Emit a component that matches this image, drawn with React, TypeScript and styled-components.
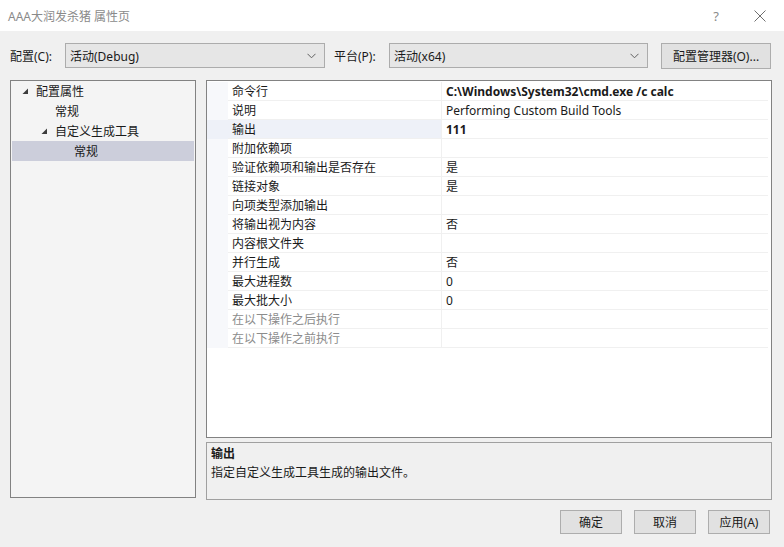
import React from 'react';
import styled, { createGlobalStyle } from 'styled-components';

type PropRow = {
    label: string,
    value?: string,
    bold?: boolean,
    disabled?: boolean,
    selected?: boolean,
}

type TreeNode = {
    label: string,
    level: number,
    expanded?: boolean,
    selected?: boolean,
}

const treeNodes: TreeNode[] = [
    {label: '配置属性', level: 0, expanded: true},
    {label: '常规', level: 1},
    {label: '自定义生成工具', level: 1, expanded: true},
    {label: '常规', level: 2, selected: true},
];

const rows: PropRow[] = [
    {label: '命令行', value: 'C:\\Windows\\System32\\cmd.exe /c calc', bold: true},
    {label: '说明', value: 'Performing Custom Build Tools'},
    {label: '输出', value: '111', bold: true, selected: true},
    {label: '附加依赖项'},
    {label: '验证依赖项和输出是否存在', value: '是'},
    {label: '链接对象', value: '是'},
    {label: '向项类型添加输出'},
    {label: '将输出视为内容', value: '否'},
    {label: '内容根文件夹'},
    {label: '并行生成', value: '否'},
    {label: '最大进程数', value: '0'},
    {label: '最大批大小', value: '0'},
    {label: '在以下操作之后执行', disabled: true},
    {label: '在以下操作之前执行', disabled: true},
];

const Arrow = () => (
    <svg width="7" height="7" viewBox="0 0 7 7">
        <polygon points="6,0.5 6,6 0.5,6" fill="#3c3c3c" />
    </svg>
);

const Chevron = () => (
    <svg width="9" height="6" viewBox="0 0 9 6">
        <polyline points="0.5,0.8 4.5,4.8 8.5,0.8" fill="none" stroke="#606060" strokeWidth="1" />
    </svg>
);

export default function App() {
    return (
        <Window>
            <GlobalStyle />
            <TitleBar>
                <Title>AAA大润发杀猪 属性页</Title>
                <TitleButtons>
                    <HelpGlyph>?</HelpGlyph>
                    <svg width="12" height="12" viewBox="0 0 12 12">
                        <path d="M0.5 0.5 L11.5 11.5 M11.5 0.5 L0.5 11.5" stroke="#6e6e6e" strokeWidth="1" />
                    </svg>
                </TitleButtons>
            </TitleBar>

            <Toolbar>
                <FieldLabel>配置(C):</FieldLabel>
                <Combo $width={260}>
                    <span>活动(Debug)</span>
                    <Chevron />
                </Combo>
                <FieldLabel $gap={9}>平台(P):</FieldLabel>
                <Combo $width={259}>
                    <span>活动(x64)</span>
                    <Chevron />
                </Combo>
                <Button $width={110} $height={26} style={{marginLeft: 13}}>配置管理器(O)...</Button>
            </Toolbar>

            <Main>
                <TreePanel>
                    {treeNodes.map((node, index) => (
                        <TreeRow key={node.label + index} $level={node.level} $selected={node.selected}>
                            <ArrowSlot>{node.expanded && <Arrow />}</ArrowSlot>
                            {node.label}
                        </TreeRow>
                    ))}
                </TreePanel>

                <RightColumn>
                    <GridPanel>
                        {rows.map(row => (
                            <GridRow key={row.label}>
                                <Gutter $selected={row.selected} />
                                <LabelCell $selected={row.selected} $disabled={row.disabled}>{row.label}</LabelCell>
                                <ValueCell $bold={row.bold}>{row.value}</ValueCell>
                            </GridRow>
                        ))}
                    </GridPanel>
                    <DescPanel>
                        <DescTitle>输出</DescTitle>
                        <DescText>指定自定义生成工具生成的输出文件。</DescText>
                    </DescPanel>
                </RightColumn>
            </Main>

            <Footer>
                <Button $width={62} $height={24}>确定</Button>
                <Button $width={62} $height={24}>取消</Button>
                <Button $width={62} $height={24}>应用(A)</Button>
            </Footer>
        </Window>
    )
}

const GlobalStyle = createGlobalStyle`
    html, body {
        margin: 0;
        padding: 0;
        background: #f0f0f0;
        overflow: hidden;
    }
    body {
        font-family: "Noto Sans", "Noto Sans CJK SC", sans-serif;
        font-size: 12px;
        color: #1a1a1a;
    }
`;

const Window = styled.div`
    width: 784px;
    height: 547px;
    display: flex;
    flex-direction: column;
    background: #f0f0f0;
`;

const TitleBar = styled.div`
    height: 31px;
    background: #ffffff;
    display: flex;
    align-items: center;
    justify-content: space-between;
    padding: 0 18px 0 8px;
`;

const Title = styled.span`
    color: #8a8a8a;
    font-size: 12px;
`;

const TitleButtons = styled.div`
    display: flex;
    align-items: center;
    gap: 35px;
`;

const HelpGlyph = styled.span`
    color: #8a8a8a;
    font-size: 13px;
`;

const Toolbar = styled.div`
    display: flex;
    align-items: center;
    padding: 11px 0 0 10px;
    height: 27px;
`;

const FieldLabel = styled.span<{ $gap?: number }>`
    margin-left: ${p => p.$gap ?? 0}px;
    width: 55px;
    flex-shrink: 0;
    white-space: nowrap;
`;

const Combo = styled.div<{ $width: number }>`
    width: ${p => p.$width}px;
    height: 25px;
    box-sizing: border-box;
    background: #e6e6e6;
    border: 1px solid #acacac;
    display: flex;
    align-items: center;
    justify-content: space-between;
    padding: 0 8px 0 4px;
    svg {
        margin-top: 1px;
    }
`;

const Button = styled.div<{ $width: number, $height: number }>`
    width: ${p => p.$width}px;
    height: ${p => p.$height}px;
    box-sizing: border-box;
    background: #e1e1e1;
    border: 1px solid #adadad;
    display: flex;
    align-items: center;
    justify-content: center;
    white-space: nowrap;
`;

const Main = styled.div`
    display: flex;
    gap: 10px;
    padding: 11px 12px 0 10px;
`;

const TreePanel = styled.div`
    width: 186px;
    height: 418px;
    box-sizing: border-box;
    border: 1px solid #828282;
    background: #f4f4f4;
    padding: 0 1px;
`;

const TreeRow = styled.div<{ $level: number, $selected?: boolean }>`
    height: 20px;
    display: flex;
    align-items: center;
    padding-left: ${p => 10 + p.$level * 19}px;
    background: ${p => p.$selected ? '#cccedb' : 'transparent'};
`;

const ArrowSlot = styled.span`
    width: 14px;
    display: inline-flex;
    align-items: center;
    svg {
        margin-top: 1px;
    }
`;

const RightColumn = styled.div`
    flex: 1;
    display: flex;
    flex-direction: column;
    gap: 4px;
`;

const GridPanel = styled.div`
    height: 358px;
    box-sizing: border-box;
    border: 1px solid #828282;
    background: #ffffff;
    padding: 1px 3px 0 0;
`;

const GridRow = styled.div`
    height: 19px;
    display: flex;
`;

const Gutter = styled.div<{ $selected?: boolean }>`
    width: 21px;
    flex-shrink: 0;
    background: ${p => p.$selected ? '#eef1f8' : '#f7f8fb'};
`;

const LabelCell = styled.div<{ $selected?: boolean, $disabled?: boolean }>`
    width: 214px;
    flex-shrink: 0;
    box-sizing: border-box;
    padding-left: 4px;
    display: flex;
    align-items: center;
    border-bottom: 1px solid #f0f0f0;
    border-right: 1px solid #f0f0f0;
    background: ${p => p.$selected ? '#eef1f8' : 'transparent'};
    color: ${p => p.$disabled ? '#8c8c8c' : '#1a1a1a'};
`;

const ValueCell = styled.div<{ $bold?: boolean }>`
    flex: 1;
    padding-left: 4px;
    display: flex;
    align-items: center;
    border-bottom: 1px solid #f0f0f0;
    font-weight: ${p => p.$bold ? 700 : 400};
    color: #1a1a1a;
`;

const DescPanel = styled.div`
    height: 58px;
    box-sizing: border-box;
    border: 1px solid #a0a0a0;
    background: #f0f0f0;
    padding: 1px 4px;
    display: flex;
    flex-direction: column;
`;

const DescTitle = styled.div`
    font-weight: 700;
    line-height: 19px;
`;

const DescText = styled.div`
    line-height: 19px;
`;

const Footer = styled.div`
    display: flex;
    justify-content: flex-end;
    gap: 12px;
    padding: 10px 14px 0 0;
`;
